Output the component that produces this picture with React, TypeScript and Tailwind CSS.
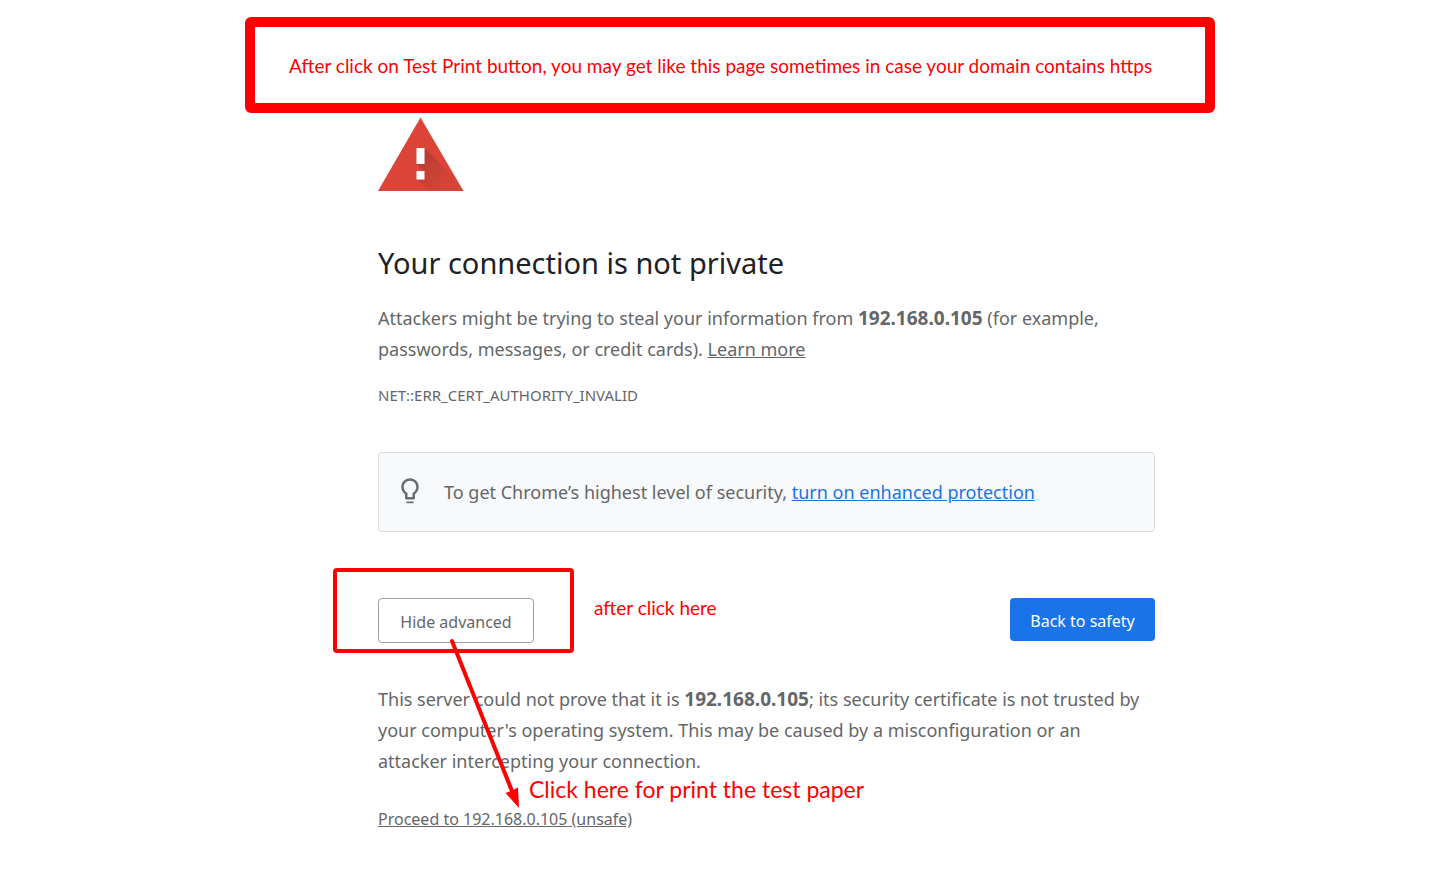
import React from "react";

const HOST = "192.168.0.105";

function WarningIcon() {
  return (
    <svg className="block h-[74px] w-[86px]" viewBox="0 0 86 74" role="img" aria-label="Warning">
      <defs>
        <linearGradient id="shade" gradientUnits="userSpaceOnUse" x1="44" y1="42" x2="66" y2="66">
          <stop offset="0" stopColor="#262626" stopOpacity="0.2" />
          <stop offset="1" stopColor="#262626" stopOpacity="0.03" />
        </linearGradient>
      </defs>
      <path d="M42.500 0.500 85.500 74H0Z" fill="#db4437" />
      <path d="M46.500 31 58 42 85.500 74H52L38.500 62.500H46.500V54L38.500 47H46.500Z" fill="url(#shade)" />
      <path d="M38.500 31h8v16h-8zM38.500 54h8v8.500h-8z" fill="#fff" />
    </svg>
  );
}

function BulbIcon() {
  return (
    <svg className="h-[30px] w-[30px] shrink-0" viewBox="0 0 24 24" fill="#6a6d70" aria-hidden="true">
      <path d="M9 20c0 .5.400 1 1 1h4c.6 0 1-.5 1-1v-.500H9v.500zm3-19C8.100 1 5 4.100 5 8c0 2.400 1.200 4.500 3 5.700V17c0 .5.400 1 1 1h6c.6 0 1-.5 1-1v-3.300c1.800-1.300 3-3.400 3-5.700 0-3.900-3.100-7-7-7zm2.900 11.100l-.900.6V16h-4v-3.300l-.900-.6C7.800 11.200 7 9.600 7 8c0-2.800 2.200-5 5-5s5 2.200 5 5c0 1.600-.800 3.200-2.100 4.100z" />
    </svg>
  );
}

function Arrow() {
  return (
    <svg
      className="pointer-events-none absolute top-10 left-[70px] h-[172px] w-[76px]"
      viewBox="0 0 76 172"
      aria-hidden="true"
    >
      <path d="M4 3 64 153" stroke="#f00" strokeWidth="4" strokeLinecap="round" />
      <path d="M71 170 57.500 155 63 153 70 149.500Z" fill="#f00" />
    </svg>
  );
}

export default function App() {
  return (
    <div className="bg-white pt-[17px] pb-10 pl-[19px] font-['Noto_Sans',sans-serif] text-[#646669]">
      <div className="mx-auto w-full max-w-[970px]">
        <p className="rounded-md border-10 border-[#f00] px-[34px] pt-[25px] pb-[23px] font-['Lato',sans-serif] text-[19px] leading-7 text-[#f00]">
          After click on Test Print button, you may get like this page sometimes in case your domain contains https
        </p>

        <main className="pt-1 pr-[60px] pl-[133px]">
          <WarningIcon />
          <h1 className="mt-12 text-[29px] leading-12 text-[#202124]">Your connection is not private</h1>
          <p className="mt-4 text-lg leading-[31px]">
            Attackers might be trying to steal your information from <strong className="text-[19px]">{HOST}</strong>{" "}
            (for example, passwords, messages, or credit cards).{" "}
            <a href="#learn-more" className="underline">
              Learn more
            </a>
          </p>
          <p className="mt-[18px] text-[15px] leading-6">NET::ERR_CERT_AUTHORITY_INVALID</p>

          <div className="mt-[45px] flex items-center gap-[19px] rounded-sm border border-[#dadce0] bg-[#f8f9fa] px-4 py-6 text-lg leading-[29px]">
            <BulbIcon />
            <p>
              To get Chrome’s highest level of security,{" "}
              <a href="#enhanced-protection" className="text-[#1a73e8] underline">
                turn on enhanced protection
              </a>
            </p>
          </div>

          <section className="relative mt-[66px]">
            <div className="flex items-start">
              <button
                type="button"
                className="h-[45px] w-[156px] rounded-sm border border-[#9aa0a6] bg-white pt-0.5 text-base"
              >
                Hide advanced
              </button>
              <span className="ml-[60px] font-['Lato',sans-serif] text-[19px] leading-5 text-[#f00]">
                after click here
              </span>
              <button
                type="button"
                className="ml-auto h-[43px] w-[145px] rounded-sm bg-[#1a73e8] pt-0.5 text-base text-white"
              >
                Back to safety
              </button>
            </div>
            <div className="pointer-events-none absolute -top-[30px] -left-[45px] h-[85px] w-[241px] rounded-sm border-4 border-[#f00]" />

            <div className="mt-[41px]">
              <p className="pr-2 text-lg leading-[31px]">
                This server could not prove that it is <strong className="text-[19px]">{HOST}</strong>; its security
                certificate is not trusted by your computer's operating system. This may be caused by a
                misconfiguration or an attacker intercepting your connection.
              </p>
              <a href="#proceed" className="mt-[30px] inline-block text-base leading-6 underline">
                Proceed to {HOST} (unsafe)
              </a>
            </div>
            <Arrow />
            <span className="absolute top-[177px] left-[151px] font-['Lato',sans-serif] text-[23px] leading-7 text-[#f00]">
              Click here for print the test paper
            </span>
          </section>
        </main>
      </div>
    </div>
  );
}
